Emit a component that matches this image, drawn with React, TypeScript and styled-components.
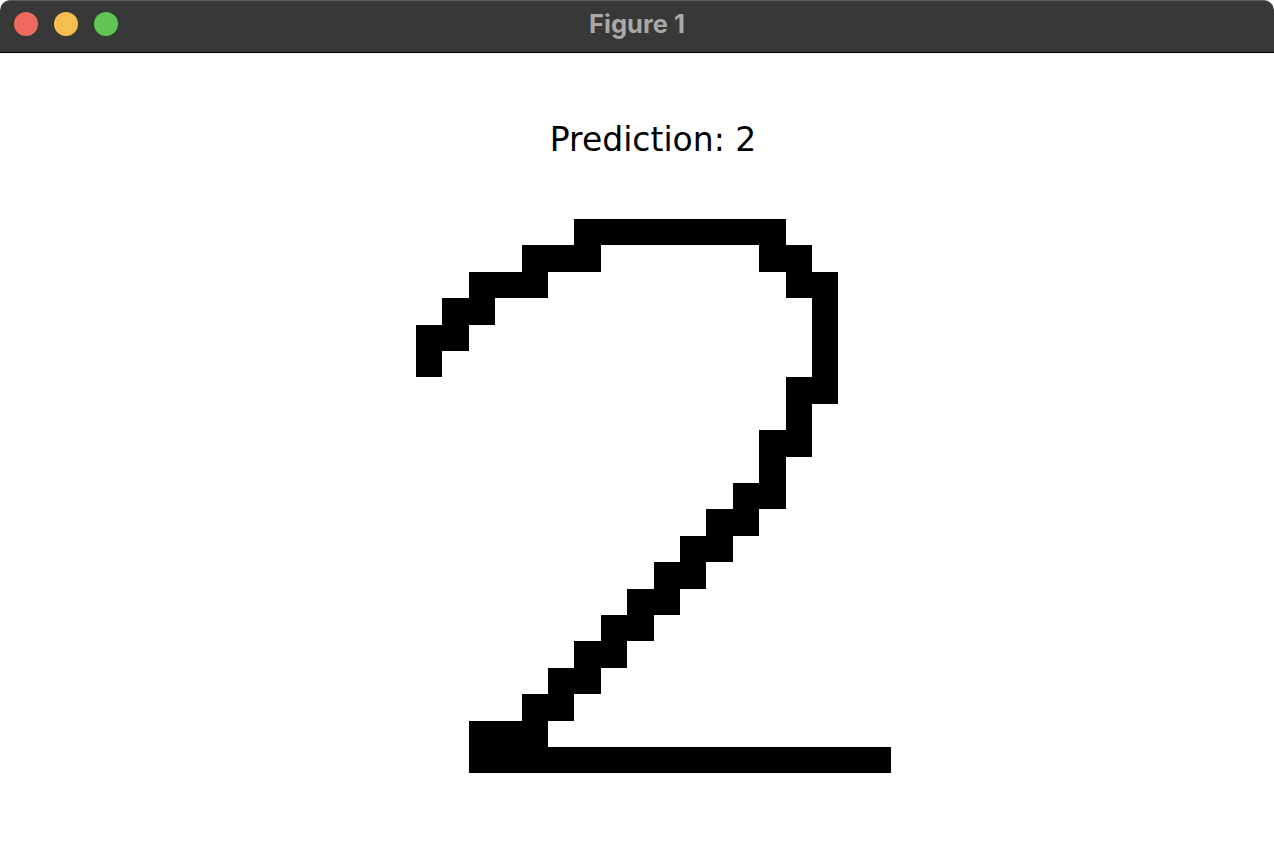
import React from "react";
import styled, { createGlobalStyle } from "styled-components";

const GlobalStyle = createGlobalStyle`
  html, body {
    margin: 0;
    padding: 0;
    background: #ffffff;
  }
  body {
    width: 1274px;
    height: 842px;
    overflow: hidden;
  }
`;

const Window = styled.div`
  width: 1274px;
  height: 842px;
  display: flex;
  flex-direction: column;
  background: #ffffff;
  border-radius: 10px 10px 0 0;
  overflow: hidden;
`;

const TitleBar = styled.div`
  position: relative;
  height: 52px;
  flex: 0 0 52px;
  background: #383838;
  border-bottom: 1px solid #000000;
  border-radius: 10px 10px 0 0;
  box-shadow: inset 0 1px 0 #5c5c5c;
  display: flex;
  align-items: center;
  justify-content: center;
`;

const Lights = styled.div`
  position: absolute;
  left: 14px;
  top: 12px;
  display: flex;
  gap: 16px;
`;

const Light = styled.span<{ $color: string }>`
  width: 24px;
  height: 24px;
  border-radius: 50%;
  background: ${(p) => p.$color};
`;

const WindowTitle = styled.div`
  font-family: "Inter", "Liberation Sans", sans-serif;
  font-weight: 700;
  font-size: 25.5px;
  color: #a8a8a8;
  margin-top: -5px;
`;

const Canvas = styled.div`
  flex: 1;
  display: flex;
  flex-direction: column;
  align-items: center;
  padding-left: 32px;
`;

const PlotTitle = styled.div`
  margin-top: 68px;
  font-family: "DejaVu Sans", sans-serif;
  font-size: 33px;
  line-height: 38px;
  color: #000000;
`;

const DigitImage = styled.svg`
  margin-top: 60px;
  margin-left: 2px;
  display: block;
`;

const CELL = 26.4;
const rows: [number, number][][] = [
  [[6, 13]],
  [[4, 6], [13, 14]],
  [[2, 4], [14, 15]],
  [[1, 2], [15, 15]],
  [[0, 1], [15, 15]],
  [[0, 0], [15, 15]],
  [[14, 15]],
  [[14, 14]],
  [[13, 14]],
  [[13, 13]],
  [[12, 13]],
  [[11, 12]],
  [[10, 11]],
  [[9, 10]],
  [[8, 9]],
  [[7, 8]],
  [[6, 7]],
  [[5, 6]],
  [[4, 5]],
  [[2, 4]],
  [[2, 17]],
];

export default function App() {
  return (
    <>
      <GlobalStyle />
      <Window>
        <TitleBar>
          <Lights>
            <Light $color="#ee6a5f" />
            <Light $color="#f5bf4f" />
            <Light $color="#61c554" />
          </Lights>
          <WindowTitle>Figure 1</WindowTitle>
        </TitleBar>
        <Canvas>
          <PlotTitle>Prediction: 2</PlotTitle>
          <DigitImage
            width={18 * CELL}
            height={21 * CELL}
            viewBox="0 0 18 21"
            shapeRendering="crispEdges"
          >
            {rows.map((segs, r) =>
              segs.map(([a, b], i) => (
                <rect key={`${r}-${i}`} x={a} y={r} width={b - a + 1} height={1} fill="#000" />
              ))
            )}
          </DigitImage>
        </Canvas>
      </Window>
    </>
  );
}
